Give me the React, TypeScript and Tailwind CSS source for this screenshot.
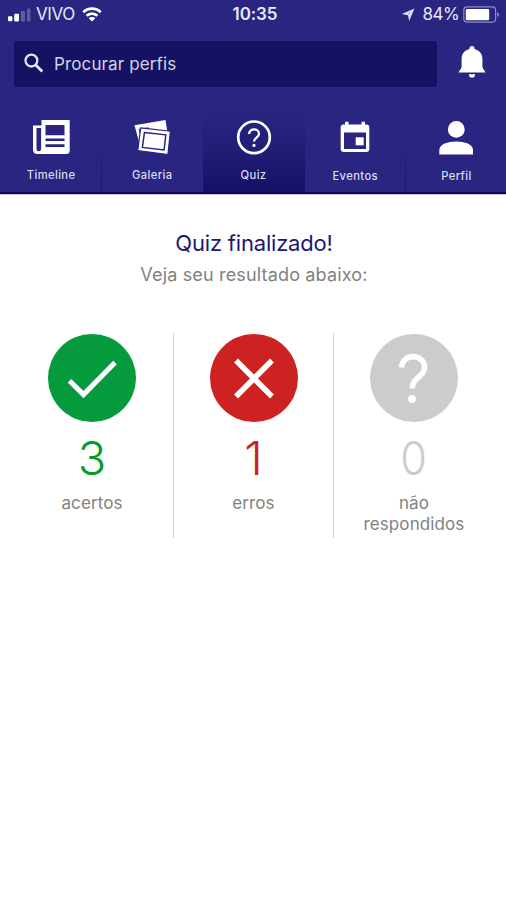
import type { ReactNode } from "react";

function SignalIcon() {
  return (
    <svg className="block" width="24" height="14" viewBox="0 0 24 14" fill="#fff">
      <rect x="0" y="8.3" width="4.4" height="5" rx="1" />
      <rect x="6.2" y="5.8" width="4.8" height="7.7" rx="1" />
      <rect x="12.8" y="3" width="4.2" height="10.5" rx="1" opacity=".25" />
      <rect x="19" y="0.5" width="3.4" height="13" rx="1" opacity=".25" />
    </svg>
  );
}

function WifiIcon() {
  return (
    <svg className="block" width="20" height="15" viewBox="0 0 20 15" fill="none" stroke="#fff" strokeWidth="2.9">
      <path d="M1.3 5.2C6 .4 14 .4 18.7 5.2" />
      <path d="M4.6 8.8C7.6 5.9 12.4 5.9 15.4 8.8" />
      <path d="M10 14.4 6.7 11.2C8.4 9.5 11.6 9.5 13.3 11.2Z" fill="#fff" stroke="none" />
    </svg>
  );
}

function BatteryIcon() {
  return (
    <svg className="block" width="37" height="17" viewBox="0 0 37 17">
      <rect x=".8" y=".8" width="31.8" height="15.4" rx="3.4" fill="none" stroke="#8f8cc4" strokeWidth="1.2" />
      <rect x="2.8" y="2.9" width="23.4" height="11.4" rx="1.2" fill="#fff" />
      <path d="M34.2 6v5c2.4-.7 2.4-4.3 0-5Z" fill="#8f8cc4" />
    </svg>
  );
}

function NewspaperIcon() {
  return (
    <svg className="block" width="38" height="36" viewBox="0 0 38 36">
      <path
        fill="#fff"
        fillRule="evenodd"
        d="M8.5 1H36.7V31.5Q36.7 35 33.2 35H4.5Q0 35 0 30.5V6.5H8.5ZM3.5 9V30a2.3 2.3 0 0 0 4.6 0V9ZM12.5 6V16.3H31.5V6ZM12.5 19.5V22.1H31.5V19.5ZM12.5 25.3V27.9H31.5V25.3Z"
      />
    </svg>
  );
}

function GalleryIcon() {
  return (
    <svg className="block" width="38" height="36" viewBox="0 0 38 36">
      <path d="M.5 6.3 31.5 1 33.5 14 5.3 24Z" fill="#fff" />
      <path d="M5.1 10.3 6.5 15M5.1 10.3 14.5 8.8" stroke="#292581" strokeWidth="1" fill="none" />
      <path d="M6.7 8.9 36.4 12.2 33.9 35.5 3.7 31.6Z" fill="#fff" stroke="#292581" strokeWidth="1.2" />
      <path d="M10.4 13.6 31.8 15.8 30.1 31 8.4 28.4Z" fill="#fff" stroke="#292581" strokeWidth="1.5" />
    </svg>
  );
}

function QuizIcon() {
  return (
    <svg className="block" width="36" height="36" viewBox="0 0 36 36" fill="none" stroke="#fff">
      <circle cx="18" cy="18.3" r="15.8" strokeWidth="2.7" />
      <path d="M13.1 14.9C13.1 8.9 23 9 23 14.9 23 18.6 18 18.7 18 22.6" strokeWidth="2.3" />
      <circle cx="18" cy="26.4" r="1.6" fill="#fff" stroke="none" />
    </svg>
  );
}

function CalendarIcon() {
  return (
    <svg className="block" width="30" height="32" viewBox="0 0 30 32">
      <path
        fill="#fff"
        fillRule="evenodd"
        d="M5 .8H8.5V3.5H21.5V.8H25V3.5H26.5Q29.3 3.5 29.3 6.3V28Q29.3 31 26.3 31H3.7Q.7 31 .7 28V6.3Q.7 3.5 3.5 3.5H5ZM4 11.5V28H26V11.5Z"
      />
      <rect x="15.7" y="16.3" width="8" height="8" fill="#fff" />
    </svg>
  );
}

function PersonIcon() {
  return (
    <svg className="block" width="34" height="36" viewBox="0 0 34 36" fill="#fff">
      <circle cx="17.3" cy="10.4" r="8.4" />
      <path d="M.3 35.5V31C.3 19.8 34 19.8 34 31V35.5Z" />
    </svg>
  );
}

type TabProps = { label: string; icon: ReactNode; active?: boolean; divider?: boolean; low?: boolean };

function Tab({ label, icon, active, divider, low }: TabProps) {
  return (
    <div className={`flex flex-1 ${active ? "bg-linear-to-b from-[#292581] via-[#211d75] to-[#151064]" : ""}`}>
      <div className="flex min-w-0 grow flex-col items-center">
        <div className="mt-[7px] flex h-9 items-center">{icon}</div>
        <span
          className={`text-[11.2px] leading-4 font-medium tracking-[0.4px] text-[#dedcf0] ${low ? "mt-[13px]" : "mt-3 pr-px"}`}
        >
          {label}
        </span>
      </div>
      {divider && <div className="-ml-px w-px bg-linear-to-b from-transparent to-[#1f1a70]" />}
    </div>
  );
}

type ResultProps = { value: ReactNode; label: ReactNode; width: string; circle: string; color: string; icon: ReactNode };

function Result({ value, label, width, circle, color, icon }: ResultProps) {
  return (
    <div className={`flex h-[205px] flex-col items-center ${width}`}>
      <div className={`mt-[1.3px] size-[88px] rounded-full ${circle}`}>{icon}</div>
      <div className={`mt-2 text-[47px] leading-[56px] font-light ${color}`}>{value}</div>
      <div className="mt-[7px] text-center text-[17px] leading-[21px] tracking-[0.1px] text-[#818181]">{label}</div>
    </div>
  );
}

export default function App() {
  return (
    <main className="h-[900px] w-[506px] overflow-hidden bg-white font-['Inter','Liberation_Sans',sans-serif]">
      <header className="flex h-[195px] flex-col border-b border-[#c9c8dc] bg-[#292581]">
        <div className="grid h-[29px] shrink-0 grid-cols-[1fr_auto_1fr] items-center pr-[6px] pl-2 text-[#e9e8f6]">
          <div className="flex items-center">
            <SignalIcon />
            <span className="ml-1 text-[17px] leading-none tracking-[-0.4px]">VIVO</span>
            <div className="ml-[7px]">
              <WifiIcon />
            </div>
          </div>
          <span className="pl-[2px] text-[17px] leading-none font-semibold tracking-[-0.1px]">10:35</span>
          <div className="flex items-center justify-end">
            <svg className="block" width="14" height="14" viewBox="0 0 14 14" fill="#dddcf0">
              <path d="M13.5.5 8.2 13 7 7.2.7 6.1ZM9.6 4.3 7.4 5.9 7.9 6.2Z" fillRule="evenodd" />
            </svg>
            <span className="mr-1 ml-2 text-[17px] leading-none tracking-[-0.6px]">84%</span>
            <BatteryIcon />
          </div>
        </div>
        <div className="mt-3 flex h-[46px] shrink-0 items-center">
          <div className="ml-[14px] flex h-[46px] w-[423px] items-center rounded-[2px] bg-[#151163]">
            <svg className="-mt-[2px] ml-[10px] block" width="20" height="20" viewBox="0 0 20 20" fill="none" stroke="#e6e5f4" strokeWidth="2.3">
              <circle cx="7.4" cy="7.6" r="5.9" />
              <path d="m11.7 11.9 6.6 6.6" strokeWidth="2.8" />
            </svg>
            <span className="ml-[10px] text-[17px] leading-none tracking-[0.13px] text-[#d4d3e5]">Procurar perfis</span>
          </div>
          <svg className="-mt-1 ml-[21px] block" width="28" height="34" viewBox="0 0 28 34" fill="#fff">
            <path d="M14 1C15.7 1 16.4 2.2 16.6 4 21.8 5.5 24.4 9 24.4 14V21.5C24.4 24 27 25.5 27.5 27.6H.5C1 25.5 3.6 24 3.6 21.5V14C3.6 9 6.2 5.5 11.4 4 11.6 2.2 12.3 1 14 1Z" />
            <path d="M10.8 29.2H17.2Q16.8 32.7 14 32.7T10.8 29.2Z" />
          </svg>
        </div>
        <nav className="mt-[25px] -mr-px flex grow border-b-2 border-[#0d0858] pl-px">
          <Tab label="Timeline" icon={<NewspaperIcon />} divider />
          <Tab label="Galeria" icon={<GalleryIcon />} />
          <Tab label="Quiz" icon={<QuizIcon />} active />
          <Tab label="Eventos" icon={<CalendarIcon />} divider low />
          <Tab label="Perfil" icon={<PersonIcon />} low />
        </nav>
      </header>
      <section className="pt-[34px] text-center">
        <h1 className="pl-[2px] text-[22px] leading-7 tracking-[-0.2px] text-[#201773]">Quiz finalizado!</h1>
        <p className="mt-[6px] pl-[2px] text-[18px] leading-6 tracking-[0.16px] text-[#818181]">Veja seu resultado abaixo:</p>
      </section>
      <section className="mt-[46px] flex pl-[11px]">
        <Result
          value="3"
          label="acertos"
          width="w-[162px]"
          circle="bg-[#059b3d]"
          color="text-[#059b27]"
          icon={
            <svg className="block" width="88" height="88" viewBox="0 0 88 88" fill="none" stroke="#fff" strokeWidth="5">
              <path d="m21.5 46.8 14 13.8 31.5-32.2" />
            </svg>
          }
        />
        <div className="w-px bg-[#d2d2d2]" />
        <Result
          value="1"
          label="erros"
          width="w-[159px]"
          circle="bg-[#cc2222]"
          color="text-[#cc1f24]"
          icon={
            <svg className="block" width="88" height="88" viewBox="0 0 88 88" fill="none" stroke="#fff" strokeWidth="5.5">
              <path d="m26 26.5 36 36M62 26.5 26 62.5" />
            </svg>
          }
        />
        <div className="w-px bg-[#d2d2d2]" />
        <Result
          value={<span className="inline-block scale-x-92">0</span>}
          label={
            <>
              não
              <br />
              respondidos
            </>
          }
          width="w-[160px]"
          circle="bg-[#cccccc]"
          color="text-[#cccccc]"
          icon={
            <svg className="block" width="88" height="88" viewBox="0 0 88 88" fill="none" stroke="#fff" strokeWidth="5.6">
              <path d="M31.6 33.5C32.4 18.5 54.6 19.5 54.6 33.5 54.6 43 42.3 43 42.3 54.5" />
              <circle cx="42" cy="65" r="3.9" fill="#fff" stroke="none" />
            </svg>
          }
        />
      </section>
    </main>
  );
}
